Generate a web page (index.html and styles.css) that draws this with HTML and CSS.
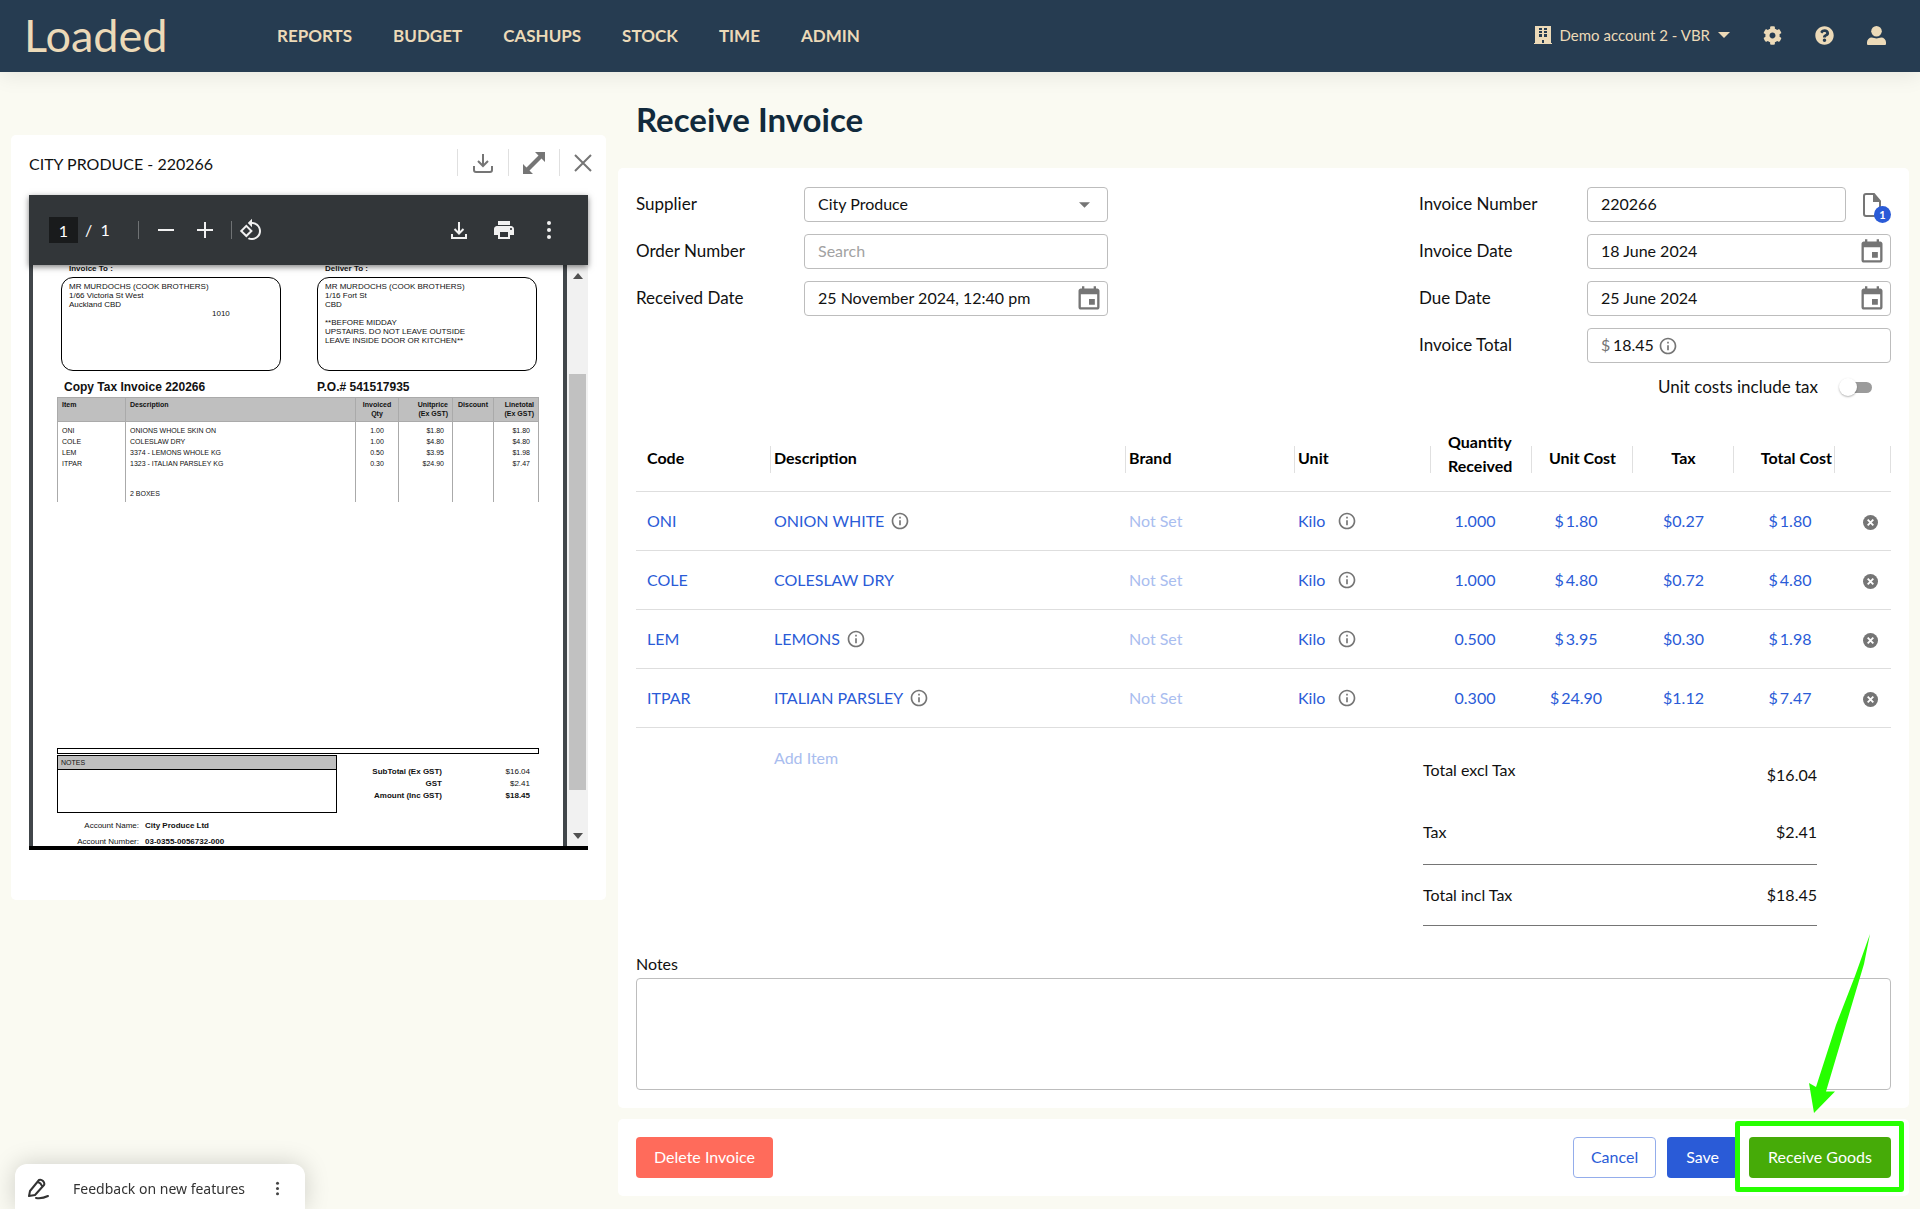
FILE: index.html
```html
<!DOCTYPE html>
<html lang="en">
<head>
	<meta charset="UTF-8">
	<meta name="viewport" content="width=device-width, initial-scale=1">
	<title>Receive Invoice - Loaded</title>
	<link rel="stylesheet" href="styles.css">
</head>
<body>

<!-- shared icons -->
<svg class="sprite" aria-hidden="true">
	<symbol id="info" viewBox="0 0 24 24"><path d="M11 7h2v2h-2zm0 4h2v6h-2zm1-9C6.48 2 2 6.48 2 12s4.48 10 10 10 10-4.48 10-10S17.52 2 12 2zm0 18c-4.41 0-8-3.59-8-8s3.59-8 8-8 8 3.59 8 8-3.59 8-8 8z"/></symbol>
	<symbol id="calendar" viewBox="0 0 24 24"><path d="M17 12h-5v5h5v-5zM16 1v2H8V1H6v2H5c-1.11 0-1.99.9-1.99 2L3 19c0 1.1.89 2 2 2h14c1.1 0 2-.9 2-2V5c0-1.1-.9-2-2-2h-1V1h-2zm3 18H5V8h14v11z"/></symbol>
	<symbol id="remove" viewBox="0 0 16 16"><circle cx="8" cy="8" r="8"/><path d="M5 5l6 6M11 5l-6 6" stroke="#fff" stroke-width="2"/></symbol>
	<symbol id="dots" viewBox="0 0 6 20"><circle cx="3" cy="3" r="2"/><circle cx="3" cy="10" r="2"/><circle cx="3" cy="17" r="2"/></symbol>
</svg>

<header class="topbar">
	<a href="#" class="logo">Loaded</a>
	<nav class="nav">
		<a href="#">REPORTS</a>
		<a href="#">BUDGET</a>
		<a href="#">CASHUPS</a>
		<a href="#">STOCK</a>
		<a href="#">TIME</a>
		<a href="#">ADMIN</a>
	</nav>
	<div class="account">
		<button type="button" class="account-btn">
			<svg width="18" height="18" viewBox="0 0 18 18"><path fill-rule="evenodd" d="M1 0h16v17h1v1H0v-1h1zM5 2v2h3V2zM10 2v2h3V2zM5 5v2h3V5zM10 5v2h3V5zM5 8v3h3V8zM10 8v3h3V8zM8 14v3h2v-3z"/></svg>
			<span>Demo account 2 - VBR</span>
			<svg width="12" height="6" viewBox="0 0 12 6"><path d="M0 0h12L6 6z"/></svg>
		</button>
		<button type="button" class="icon-btn" aria-label="Settings">
			<svg width="19" height="19" viewBox="0 0 512 512"><path d="M487.4 315.7l-42.6-24.6c4.3-23.2 4.3-47 0-70.2l42.6-24.6c4.9-2.8 7.1-8.6 5.5-14-11.1-35.6-30-67.8-54.7-94.6-3.8-4.1-10-5.1-14.8-2.3L380.8 110c-17.9-15.4-38.5-27.3-60.8-35.1V25.8c0-5.6-3.9-10.5-9.4-11.7-36.7-8.2-74.3-7.8-109.2 0-5.5 1.2-9.4 6.1-9.4 11.7V75c-22.2 7.9-42.8 19.8-60.8 35.1L88.7 85.5c-4.9-2.8-11-1.9-14.8 2.3-24.7 26.7-43.6 58.9-54.7 94.6-1.7 5.4.6 11.2 5.5 14L67.3 221c-4.3 23.2-4.3 47 0 70.2l-42.6 24.6c-4.9 2.8-7.1 8.6-5.5 14 11.1 35.6 30 67.8 54.7 94.6 3.8 4.1 10 5.1 14.8 2.3l42.6-24.6c17.9 15.4 38.5 27.3 60.8 35.1v49.2c0 5.6 3.9 10.5 9.4 11.7 36.7 8.2 74.3 7.8 109.2 0 5.5-1.2 9.4-6.1 9.4-11.7v-49.2c22.2-7.9 42.8-19.8 60.8-35.1l42.6 24.6c4.9 2.8 11 1.9 14.8-2.3 24.7-26.7 43.6-58.9 54.7-94.6 1.5-5.5-.7-11.3-5.6-14.1zM256 336c-44.1 0-80-35.9-80-80s35.9-80 80-80 80 35.9 80 80-35.9 80-80 80z"/></svg>
		</button>
		<button type="button" class="icon-btn" aria-label="Help">
			<svg width="19" height="19" viewBox="0 0 512 512"><path d="M504 256c0 136.997-111.043 248-248 248S8 392.997 8 256C8 119.083 119.043 8 256 8s248 111.083 248 248zM262.655 90c-54.497 0-89.255 22.957-116.549 63.758-3.536 5.286-2.353 12.415 2.715 16.258l34.699 26.31c5.205 3.947 12.621 3.008 16.665-2.122 17.864-22.658 30.113-35.797 57.303-35.797 20.429 0 45.698 13.148 45.698 32.958 0 14.976-12.363 22.667-32.534 33.976C247.128 238.528 216 254.941 216 296v4c0 6.627 5.373 12 12 12h56c6.627 0 12-5.373 12-12v-1.333c0-28.462 83.186-29.647 83.186-106.667 0-58.002-60.165-102-116.531-102zM256 338c-25.365 0-46 20.635-46 46 0 25.364 20.635 46 46 46s46-20.636 46-46c0-25.365-20.635-46-46-46z"/></svg>
		</button>
		<button type="button" class="icon-btn" aria-label="Profile">
			<svg width="19" height="19" viewBox="0 0 18 18"><circle cx="9" cy="5" r="5"/><path d="M0 18v-2.500a4.500 4.500 0 0 1 4.500-4.500q4.500 1.500 9 0a4.500 4.500 0 0 1 4.500 4.500V17a1 1 0 0 1-1 1H1a1 1 0 0 1-1-1z"/></svg>
		</button>
	</div>
</header>

<main class="page">
	<aside class="card preview">
		<div class="preview-head">
			<h2>CITY PRODUCE - 220266</h2>
			<button type="button" aria-label="Download">
				<svg width="20" height="20" viewBox="0 0 20 20" fill="none" stroke="#757575" stroke-width="2"><path d="M10 1v12M5 8l5 5 5-5M1 13v4q0 2 2 2h14q2 0 2-2v-4"/></svg>
			</button>
			<button type="button" aria-label="Expand">
				<svg width="22" height="22" viewBox="0 0 22 22" fill="#757575"><path d="M12 0h10v10l-3.500-3.500L6.500 18.500 10 22H0V12l3.500 3.500 12-12z"/></svg>
			</button>
			<button type="button" aria-label="Close">
				<svg width="18" height="18" viewBox="0 0 18 18" stroke="#757575" stroke-width="2"><path d="M1 1l16 16M17 1L1 17"/></svg>
			</button>
		</div>

		<div class="pdf">
			<div class="pdf-bar">
				<input type="text" class="pdf-page-no" value="1" aria-label="Page number">
				<span class="pdf-count">/ &nbsp;1</span>
				<i class="pdf-sep"></i>
				<button type="button" aria-label="Zoom out"><svg width="24" height="24" viewBox="0 0 24 24"><path d="M4 11h16v2H4z"/></svg></button>
				<button type="button" aria-label="Zoom in"><svg width="24" height="24" viewBox="0 0 24 24"><path d="M4 11h7V4h2v7h7v2h-7v7h-2v-7H4z"/></svg></button>
				<i class="pdf-sep"></i>
				<button type="button" class="pdf-rotate" aria-label="Rotate"><svg width="24" height="24" viewBox="0 0 24 24"><path d="M7.340 6.410L.86 12.900l6.490 6.480 6.490-6.480-6.500-6.490zM3.690 12.900l3.660-3.660L11 12.900l-3.660 3.660-3.650-3.660zm15.670-6.260C17.610 4.880 15.300 4 13 4V.76L8.760 5 13 9.240V6c1.790 0 3.580.68 4.950 2.050 2.730 2.730 2.730 7.170 0 9.900C16.580 19.320 14.790 20 13 20c-.97 0-1.940-.21-2.840-.61l-1.490 1.490C10.020 21.620 11.510 22 13 22c2.300 0 4.610-.88 6.360-2.640 3.520-3.510 3.520-9.210 0-12.720z"/></svg></button>
				<div class="pdf-tools">
					<button type="button" aria-label="Save file"><svg width="24" height="24" viewBox="0 0 24 24" fill="none" stroke="#f1f1f1" stroke-width="2"><path d="M12 4v11M7.500 11l4.500 4.500 4.500-4.500M5 16v4h14v-4"/></svg></button>
					<button type="button" aria-label="Print"><svg width="24" height="24" viewBox="0 0 24 24"><path d="M19 8H5c-1.660 0-3 1.340-3 3v6h4v4h12v-4h4v-6c0-1.660-1.340-3-3-3zm-3 11H8v-5h8v5zm3-7c-.55 0-1-.45-1-1s.45-1 1-1 1 .45 1 1-.45 1-1 1zm-1-9H6v4h12V3z"/></svg></button>
					<button type="button" aria-label="More"><svg width="6" height="20"><use href="#dots"/></svg></button>
				</div>
			</div>

			<div class="pdf-view">
				<div class="doc">
					<div class="doc-cols doc-label"><span>Invoice To :</span><span>Deliver To :</span></div>
					<div class="doc-cols">
						<div class="doc-box">
							MR MURDOCHS (COOK BROTHERS)<br>
							1/66 Victoria St West<br>
							Auckland CBD<br>
							<span class="postcode">1010</span>
						</div>
						<div class="doc-box">
							MR MURDOCHS (COOK BROTHERS)<br>
							1/16 Fort St<br>
							CBD<br><br>
							**BEFORE MIDDAY<br>
							UPSTAIRS. DO NOT LEAVE OUTSIDE<br>
							LEAVE INSIDE DOOR OR KITCHEN**
						</div>
					</div>
					<div class="doc-cols doc-title"><b>Copy Tax Invoice 220266</b><b>P.O.# 541517935</b></div>

					<table class="doc-table">
						<colgroup><col class="d-item"><col><col class="d-qty"><col class="d-price"><col class="d-disc"><col class="d-total"></colgroup>
						<thead>
							<tr><th>Item</th><th>Description</th><th class="mid">Invoiced<br>Qty</th><th class="end">Unitprice<br>(Ex GST)</th><th class="mid">Discount</th><th class="end">Linetotal<br>(Ex GST)</th></tr>
						</thead>
						<tbody>
							<tr><td>ONI</td><td>ONIONS WHOLE SKIN ON</td><td class="mid">1.00</td><td class="end">$1.80</td><td></td><td class="end">$1.80</td></tr>
							<tr><td>COLE</td><td>COLESLAW DRY</td><td class="mid">1.00</td><td class="end">$4.80</td><td></td><td class="end">$4.80</td></tr>
							<tr><td>LEM</td><td>3374 - LEMONS WHOLE KG</td><td class="mid">0.50</td><td class="end">$3.95</td><td></td><td class="end">$1.98</td></tr>
							<tr><td>ITPAR</td><td>1323 - ITALIAN PARSLEY KG</td><td class="mid">0.30</td><td class="end">$24.90</td><td></td><td class="end">$7.47</td></tr>
							<tr class="last"><td></td><td>2 BOXES</td><td></td><td></td><td></td><td></td></tr>
						</tbody>
					</table>

					<div class="doc-rule"></div>
					<div class="doc-foot">
						<div class="doc-notes"><div>NOTES</div></div>
						<dl class="doc-sums">
							<dt>SubTotal (Ex GST)</dt><dd>$16.04</dd>
							<dt>GST</dt><dd>$2.41</dd>
							<dt>Amount (Inc GST)</dt><dd><b>$18.45</b></dd>
						</dl>
					</div>
					<dl class="doc-bank">
						<dt>Account Name:</dt><dd>City Produce Ltd</dd>
						<dt>Account Number:</dt><dd>03-0355-0056732-000</dd>
					</dl>
				</div>
				<div class="scrollbar">
					<svg width="10" height="6" viewBox="0 0 10 6"><path d="M0 6h10L5 0z"/></svg>
					<div class="thumb"></div>
					<svg width="10" height="6" viewBox="0 0 10 6"><path d="M0 0h10L5 6z"/></svg>
				</div>
			</div>
		</div>
	</aside>

	<section class="content">
		<h1>Receive Invoice</h1>

		<form class="card invoice" id="invoice-form">
			<div class="fields">
				<div class="field-col">
					<div class="field">
						<label for="supplier">Supplier</label>
						<div class="box">
							<select id="supplier"><option>City Produce</option></select>
							<svg class="chevron" width="11" height="6" viewBox="0 0 12 6"><path d="M0 0h12L6 6z"/></svg>
						</div>
					</div>
					<div class="field">
						<label for="order">Order Number</label>
						<div class="box"><input type="text" id="order" placeholder="Search"></div>
					</div>
					<div class="field">
						<label for="received">Received Date</label>
						<div class="box"><input type="text" id="received" value="25 November 2024, 12:40 pm"><svg width="28" height="28"><use href="#calendar"/></svg></div>
					</div>
				</div>

				<div class="field-col">
					<div class="field">
						<label for="number">Invoice Number</label>
						<div class="box"><input type="text" id="number" value="220266"></div>
						<button type="button" class="attach" aria-label="Attachments">
							<svg width="18" height="24" viewBox="0 0 18 24"><path d="M11 1H3Q1 1 1 3v18q0 2 2 2h12q2 0 2-2V8z" fill="none" stroke="#757575" stroke-width="2"/><path d="M10 1l8 8h-8z" fill="#757575"/></svg>
							<span class="badge">1</span>
						</button>
					</div>
					<div class="field">
						<label for="inv-date">Invoice Date</label>
						<div class="box"><input type="text" id="inv-date" value="18 June 2024"><svg width="28" height="28"><use href="#calendar"/></svg></div>
					</div>
					<div class="field">
						<label for="due-date">Due Date</label>
						<div class="box"><input type="text" id="due-date" value="25 June 2024"><svg width="28" height="28"><use href="#calendar"/></svg></div>
					</div>
					<div class="field">
						<label for="total">Invoice Total</label>
						<div class="box money"><span>$</span><input type="text" id="total" value="18.45"><svg width="20" height="20"><use href="#info"/></svg></div>
					</div>
					<label class="switch">Unit costs include tax <input type="checkbox"></label>
				</div>
			</div>

			<table class="items">
				<colgroup><col class="c-code"><col><col class="c-brand"><col class="c-unit"><col class="c-num"><col class="c-num"><col class="c-num"><col class="c-num"><col class="c-del"></colgroup>
				<thead>
					<tr><th>Code</th><th>Description</th><th>Brand</th><th>Unit</th><th class="qty">Quantity Received</th><th class="num">Unit Cost</th><th class="num">Tax</th><th class="total">Total Cost</th><th></th></tr>
				</thead>
				<tbody>
					<tr>
						<td>ONI</td>
						<td><span class="with-info">ONION WHITE <svg width="20" height="20"><use href="#info"/></svg></span></td>
						<td class="unset">Not Set</td>
						<td><span class="with-info unit">Kilo <svg width="20" height="20"><use href="#info"/></svg></span></td>
						<td>1.000</td><td><i>$</i>1.80</td><td>$0.27</td><td><i>$</i>1.80</td>
						<td><button type="button" aria-label="Remove ONI"><svg width="15" height="15"><use href="#remove"/></svg></button></td>
					</tr>
					<tr>
						<td>COLE</td>
						<td>COLESLAW DRY</td>
						<td class="unset">Not Set</td>
						<td><span class="with-info unit">Kilo <svg width="20" height="20"><use href="#info"/></svg></span></td>
						<td>1.000</td><td><i>$</i>4.80</td><td>$0.72</td><td><i>$</i>4.80</td>
						<td><button type="button" aria-label="Remove COLE"><svg width="15" height="15"><use href="#remove"/></svg></button></td>
					</tr>
					<tr>
						<td>LEM</td>
						<td><span class="with-info">LEMONS <svg width="20" height="20"><use href="#info"/></svg></span></td>
						<td class="unset">Not Set</td>
						<td><span class="with-info unit">Kilo <svg width="20" height="20"><use href="#info"/></svg></span></td>
						<td>0.500</td><td><i>$</i>3.95</td><td>$0.30</td><td><i>$</i>1.98</td>
						<td><button type="button" aria-label="Remove LEM"><svg width="15" height="15"><use href="#remove"/></svg></button></td>
					</tr>
					<tr>
						<td>ITPAR</td>
						<td><span class="with-info">ITALIAN PARSLEY <svg width="20" height="20"><use href="#info"/></svg></span></td>
						<td class="unset">Not Set</td>
						<td><span class="with-info unit">Kilo <svg width="20" height="20"><use href="#info"/></svg></span></td>
						<td>0.300</td><td><i>$</i>24.90</td><td>$1.12</td><td><i>$</i>7.47</td>
						<td><button type="button" aria-label="Remove ITPAR"><svg width="15" height="15"><use href="#remove"/></svg></button></td>
					</tr>
				</tbody>
			</table>

			<div class="summary">
				<button type="button" class="add-item">Add Item</button>
				<dl class="totals">
					<div><dt>Total excl Tax</dt><dd>$16.04</dd></div>
					<div><dt>Tax</dt><dd>$2.41</dd></div>
					<div class="grand"><dt>Total incl Tax</dt><dd>$18.45</dd></div>
				</dl>
			</div>

			<label for="notes" class="notes-label">Notes</label>
			<textarea id="notes" class="notes"></textarea>
		</form>

		<div class="card actions">
			<button type="button" class="btn danger">Delete Invoice</button>
			<button type="button" class="btn outline">Cancel</button>
			<button type="submit" form="invoice-form" class="btn primary">Save</button>
			<div class="receive">
				<button type="button" class="btn success">Receive Goods</button>
				<svg class="arrow" width="62" height="180" viewBox="0 0 62 180"><path d="M61 0L46 42 27 91 7 153 0 149 5 179 26 157.500H17L38 87 55 30z"/></svg>
			</div>
		</div>
	</section>
</main>

<div class="feedback">
	<svg width="22" height="22" viewBox="0 0 22 22" fill="none" stroke="#333" stroke-width="2" stroke-linecap="round" stroke-linejoin="round"><path d="M2 18l1-5L12 2q2-1 4 1t1 4L8 17zM11 4q3 1 4 4M9 20q6 1 12-2"/></svg>
	<a href="#">Feedback on new features</a>
	<button type="button" aria-label="Feedback options"><svg width="5" height="15" viewBox="0 0 6 20"><use href="#dots"/></svg></button>
</div>

</body>
</html>
```

FILE: styles.css
```css
* {
	box-sizing: border-box;
}

body {
	margin: 0;
	background: #fafaf2;
	color: #111;
	font: 16px/24px Lato, "Open Sans", sans-serif;
}

button, input, select, textarea {
	font: inherit;
	color: inherit;
}

button {
	padding: 0;
	border: 0;
	background: none;
	cursor: pointer;
}

a {
	color: inherit;
	text-decoration: none;
}

h1, h2, dl, dd {
	margin: 0;
}

svg {
	display: block;
	flex: none;
}

.sprite {
	display: none;
}

.card {
	background: #fff;
	border-radius: 5px;
}

/* top bar */
.topbar {
	display: flex;
	align-items: center;
	height: 72px;
	padding: 0 34px 2px 24px;
	background: #263c51;
	color: #ecdab8;
	fill: #ecdab8;
	box-shadow: 0 4px 20px rgba(0, 0, 0, .08);
}

.logo {
	width: 253px;
	font-size: 45px;
	line-height: 68px;
}

.nav {
	display: flex;
	gap: 41px;
	padding-top: 2px;
	font-size: 17px;
	font-weight: bold;
}

.account {
	display: flex;
	align-items: center;
	gap: 33px;
	margin-left: auto;
	font-size: 15px;
}

.account-btn {
	display: flex;
	align-items: center;
	gap: 8px;
}

/* page */
.page {
	display: grid;
	grid-template-columns: 595px 1fr;
	gap: 12px;
	align-items: start;
	padding: 0 11px 12px;
}

/* invoice preview */
.preview {
	margin-top: 63px;
	padding: 14px 18px 50px;
}

.preview-head {
	display: flex;
	height: 27px;
	margin-bottom: 19px;
}

.preview-head h2 {
	flex: 1;
	font-size: 16px;
	font-weight: normal;
	line-height: 30px;
}

.preview-head button {
	display: grid;
	place-items: center;
	width: 51px;
	border-left: 1px solid #e0e0e0;
}

.preview-head button:last-child {
	width: 29px;
	padding-left: 14px;
}

.pdf {
	border-bottom: 4px solid #000;
}

.pdf-bar {
	display: flex;
	align-items: center;
	height: 70px;
	padding: 0 28px 0 20px;
	background: #323639;
	color: #fff;
	fill: #f1f1f1;
	position: relative;
	box-shadow: 0 2px 6px rgba(0, 0, 0, .5);
}

.pdf-page-no {
	width: 29px;
	height: 26px;
	margin-right: 7px;
	padding: 0;
	border: 0;
	background: #191b1c;
	text-align: center;
}

.pdf-count {
	width: 53px;
}

.pdf-sep {
	width: 1px;
	height: 18px;
	background: #6f7274;
}

.pdf-bar > button {
	margin-left: 15px;
}

.pdf-bar > button + .pdf-sep {
	margin-left: 14px;
}

.pdf-bar > .pdf-rotate {
	margin-left: 7px;
}

.pdf-tools {
	display: flex;
	align-items: center;
	gap: 21px;
	margin-left: auto;
	padding-right: 8px;
}

.pdf-tools button:last-child {
	margin-left: 9px;
}

.pdf-view {
	display: flex;
	height: 581px;
	padding-left: 4px;
	background: #41464a;
}

.doc {
	flex: 1;
	margin-right: 4px;
	padding: 0 24px;
	overflow: hidden;
	background: #fff;
	font: 8px/9px "Liberation Sans", Arial, sans-serif;
}

.doc-cols {
	display: grid;
	grid-template-columns: 220px 220px;
	gap: 36px;
	padding-left: 4px;
}

.doc-label {
	padding-left: 12px;
	margin-bottom: 5px;
	font-weight: bold;
	line-height: 7px;
}

.doc-box {
	height: 94px;
	padding: 4px 7px;
	border: 1px solid #000;
	border-radius: 12px;
}

.postcode {
	margin-left: 143px;
}

.doc-title {
	margin: 9px 0 3px;
	font-size: 12px;
	line-height: 14px;
}

.doc-title b:first-child {
	padding-left: 3px;
}

.doc-table {
	width: 100%;
	table-layout: fixed;
	border-collapse: collapse;
	font-size: 7px;
}

.d-item { width: 68px; }
.d-qty { width: 43px; }
.d-price { width: 54px; }
.d-disc { width: 41px; }
.d-total { width: 45px; }

.doc-table th {
	height: 24px;
	padding: 2px 4px;
	border: 1px solid #aaa;
	background: #bfbfbf;
	text-align: left;
	vertical-align: top;
}

.doc-table td {
	height: 11px;
	padding: 1px 8px 0 4px;
	border: solid #aaa;
	border-width: 0 1px;
}

.doc-table tr:first-child td {
	height: 14px;
	padding-top: 4px;
}

.doc-table .last td {
	height: 33px;
	padding-top: 17px;
}

.doc-table .mid {
	padding-left: 0;
	padding-right: 0;
	text-align: center;
}

.doc-table .end {
	text-align: right;
}

.doc-rule {
	height: 6px;
	margin: 246px 0 1px;
	border: 1px solid #000;
}

.doc-foot {
	display: flex;
	justify-content: space-between;
}

.doc-notes {
	width: 280px;
	height: 58px;
	border: 1px solid #000;
}

.doc-notes div {
	padding: 2px 3px;
	border-bottom: 1px solid #000;
	background: #bfbfbf;
	font-size: 7px;
}

.doc-sums {
	display: grid;
	grid-template-columns: auto 88px;
	align-content: start;
	padding: 11px 9px 0 0;
	line-height: 12px;
	text-align: right;
}

.doc-sums dt {
	font-weight: bold;
}

.doc-bank {
	display: grid;
	grid-template-columns: 82px auto;
	column-gap: 6px;
	padding-top: 5px;
	line-height: 16px;
}

.doc-bank dt {
	text-align: right;
}

.doc-bank dd {
	font-weight: bold;
}

.scrollbar {
	display: flex;
	flex-direction: column;
	align-items: center;
	width: 21px;
	padding: 8px 0 7px;
	background: #f1f1f1;
	fill: #505050;
}

.thumb {
	width: 17px;
	height: 416px;
	margin: auto 0 43px;
	background: #c1c1c1;
}

/* receive invoice */
.content h1 {
	padding: 26px 18px 28px;
	color: #112a3c;
	font-size: 33px;
	line-height: 42px;
}

.invoice {
	padding: 19px 18px 18px;
}

.fields {
	display: flex;
	justify-content: space-between;
}

.field-col {
	display: grid;
	gap: 12px;
	align-content: start;
	width: 472px;
}

.field {
	display: flex;
	align-items: center;
	font-size: 17px;
}

.field label {
	width: 168px;
	flex: none;
	padding-bottom: 2px;
}

.box {
	display: flex;
	flex: 1;
	align-items: center;
	height: 35px;
	padding: 0 4px 0 13px;
	border: 1px solid #bdbdbd;
	border-radius: 4px;
	fill: #757575;
	font-size: 16px;
}

.box input, .box select {
	flex: 1;
	min-width: 0;
	height: 100%;
	padding: 0 0 2px;
	border: 0;
	background: none;
	appearance: none;
	outline: 0;
}

.box input::placeholder {
	color: #a2a2a2;
}

.chevron {
	margin-right: 13px;
}

.money span {
	width: 12px;
	padding-bottom: 2px;
	color: #757575;
}

.money input {
	flex: 0 0 45px;
}

.attach {
	position: relative;
	width: 45px;
	padding-left: 17px;
}

.badge {
	position: absolute;
	right: 0;
	bottom: -6px;
	width: 17px;
	height: 17px;
	border-radius: 50%;
	background: #2a5bd7;
	color: #fff;
	font-size: 11px;
	font-weight: bold;
	line-height: 17px;
}

.switch {
	display: flex;
	align-items: center;
	justify-content: flex-end;
	gap: 24px;
	padding-right: 19px;
	font-size: 17px;
}

.switch input {
	appearance: none;
	display: flex;
	align-items: center;
	width: 30px;
	height: 11px;
	margin: 0;
	border-radius: 6px;
	background: #9b9b9b;
}

.switch input::before {
	content: "";
	width: 18px;
	height: 18px;
	margin-left: -3px;
	border-radius: 50%;
	background: #fff;
	box-shadow: 0 1px 2px rgba(0, 0, 0, .3);
}

/* items */
.items {
	width: 100%;
	margin-top: 30px;
	table-layout: fixed;
	border-collapse: collapse;
	color: #2a5bd7;
}

.c-code { width: 135px; }
.c-brand { width: 169px; }
.c-unit { width: 136px; }
.c-num { width: 101px; }
.c-del { width: 56px; }

.items tr {
	border-bottom: 1px solid #dedede;
}

.items th {
	height: 62px;
	padding: 0 3px 4px;
	background: linear-gradient(#e0e0e0, #e0e0e0) no-repeat right 17px / 1px 27px;
	color: #000;
	text-align: left;
}

.items .qty {
	padding: 0 10px 12px 17px;
}

.items .num {
	text-align: center;
}

.items .total {
	text-align: right;
}

.items td {
	height: 59px;
	padding: 0 3px;
}

.items th:first-child, .items td:first-child {
	padding-left: 11px;
}

.items td:nth-child(n+5) {
	padding: 0 13px 0 0;
	text-align: center;
}

.items td:nth-child(7) {
	padding: 0;
}

.items td:nth-child(8) {
	padding: 0 0 0 11px;
}

.items td:last-child {
	padding: 3px 0 0 14px;
}

.items td:last-child button {
	display: block;
	margin: auto;
}

.items i {
	margin-right: 2px;
	font-style: normal;
}

.with-info {
	display: flex;
	align-items: center;
	gap: 6px;
}

.with-info.unit {
	gap: 12px;
}

.with-info svg, .items button {
	fill: #757575;
}

.items .unset, .add-item {
	color: #a9bdef;
}

.summary {
	display: flex;
	justify-content: space-between;
	align-items: start;
	padding: 18px 74px 0 138px;
}

.totals {
	width: 394px;
	padding-top: 12px;
}

.totals div {
	display: flex;
	justify-content: space-between;
	padding-bottom: 20px;
}

.totals div:first-child {
	padding-bottom: 33px;
}

.totals div:first-child dd {
	padding-top: 5px;
}

.totals .grand {
	padding: 18px 0;
	border: solid #757575;
	border-width: 1px 0;
}

.notes-label {
	display: block;
	margin-top: 26px;
}

.notes {
	display: block;
	width: 100%;
	height: 112px;
	margin-top: 2px;
	border: 1px solid #bdbdbd;
	border-radius: 4px;
	resize: none;
}

/* actions */
.actions {
	display: flex;
	align-items: center;
	gap: 11px;
	height: 77px;
	margin-top: 11px;
	padding: 0 18px;
}

.btn {
	height: 41px;
	padding: 0 19px;
	border-radius: 4px;
	color: #fff;
}

.danger {
	margin-right: auto;
	padding: 0 18px;
	background: #ff6b5b;
}

.outline {
	padding: 0 17px;
	border: 1px solid #94adeb;
	color: #2a5bd7;
}

.primary {
	background: #2a5bd7;
}

.success {
	background: #46ab08;
}

/* highlight round the receive button */
.receive {
	position: relative;
}

.receive::before {
	content: "";
	position: absolute;
	inset: -16px -13px -14px -14px;
	border: 5px solid #26ff00;
	border-radius: 3px;
}

.arrow {
	position: absolute;
	right: 20px;
	bottom: 64px;
	fill: #26ff00;
}

/* feedback tab */
.feedback {
	position: fixed;
	left: 15px;
	bottom: 0;
	display: flex;
	align-items: center;
	width: 290px;
	height: 45px;
	padding: 4px 25px 0 12px;
	border-radius: 12px 12px 0 0;
	background: #fff;
	box-shadow: 0 0 24px rgba(0, 0, 0, .18);
	color: #333;
	fill: #444;
	font: 14px/20px "Noto Sans", sans-serif;
}

.feedback a {
	flex: 1;
	margin-left: 24px;
}
```
